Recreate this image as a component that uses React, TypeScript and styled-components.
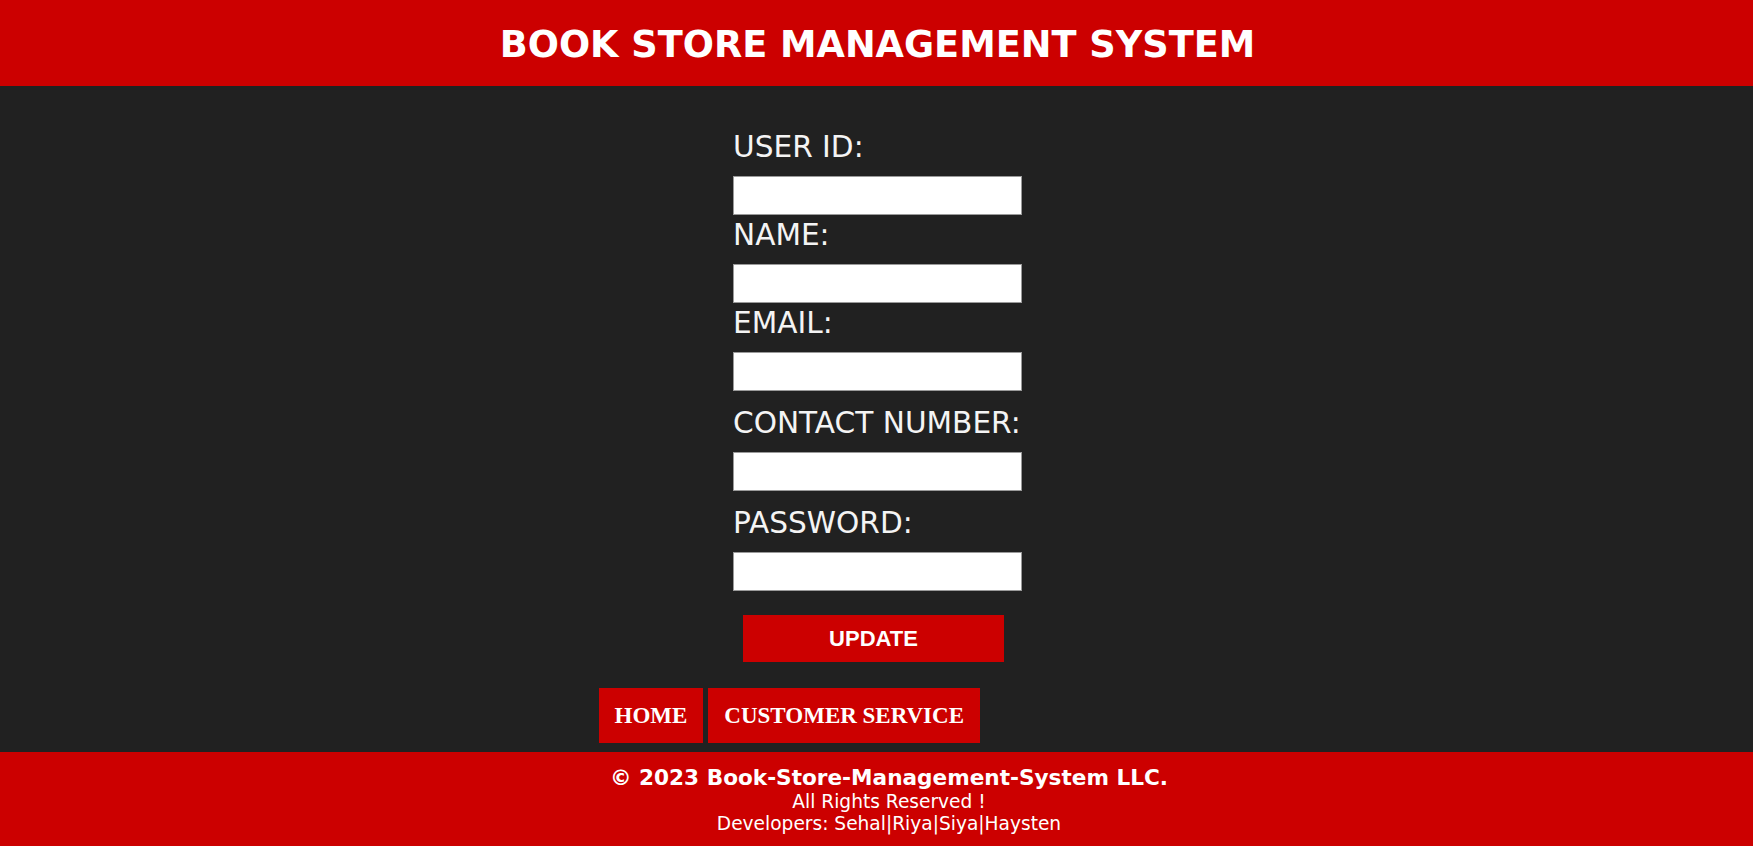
import React from "react";
import styled, { createGlobalStyle } from "styled-components";

const GlobalStyle = createGlobalStyle`
  html, body {
    margin: 0;
    padding: 0;
    background: #212121;
  }
  * { box-sizing: border-box; }
`;

const Page = styled.div`
  display: flex;
  flex-direction: column;
  min-height: 846px;
  background: #212121;
  font-family: "DejaVu Sans", Verdana, sans-serif;
`;

const Header = styled.header`
  height: 86px;
  background: #cc0000;
  display: flex;
  align-items: center;
  justify-content: center;
`;

const Title = styled.h1`
  margin: 0;
  color: #ffffff;
  font-family: "DejaVu Sans", Verdana, sans-serif;
  font-weight: bold;
  font-size: 36.7px;
  line-height: 1;
  padding-top: 4px;
  padding-left: 2px;
`;

const Main = styled.main`
  flex: 1;
  display: flex;
  flex-direction: column;
  align-items: center;
  padding: 44px 0 9px 2px;
`;

const Form = styled.form`
  width: 289px;
  display: flex;
  flex-direction: column;
`;

const Field = styled.div<{ $top: number }>`
  display: flex;
  flex-direction: column;
  margin-top: ${(p) => p.$top}px;
`;

const Label = styled.label`
  display: block;
  color: #f4f4f4;
  font-family: "DejaVu Sans", Verdana, sans-serif;
  font-size: 29.6px;
  line-height: 34px;
  white-space: nowrap;
  margin-bottom: 12px;
`;

const Input = styled.input`
  width: 289px;
  height: 39px;
  border: 1px solid #9a9a9a;
  background: #ffffff;
  padding: 0 6px;
  margin: 0;
  font-size: 18px;
  outline: none;
`;

const UpdateButton = styled.button`
  width: 261px;
  height: 47px;
  margin: 24px 0 0 10px;
  border: none;
  background: #cc0000;
  color: #ffffff;
  font-family: "Liberation Sans", Arial, sans-serif;
  font-weight: bold;
  font-size: 22px;
  cursor: pointer;
`;

const NavRow = styled.nav`
  width: 556px;
  margin-right: 2px;
  display: flex;
  gap: 5px;
  margin-top: 26px;
`;

const NavButton = styled.a`
  display: flex;
  align-items: center;
  height: 55px;
  padding: 0 16px;
  background: #cc0000;
  color: #ffffff;
  font-family: "Liberation Serif", "Times New Roman", serif;
  font-weight: bold;
  font-size: 23px;
  text-decoration: none;
  white-space: nowrap;
`;

const Footer = styled.footer`
  background: #cc0000;
  color: #ffffff;
  text-align: center;
  padding: 13px 0 11px 25px;
  font-family: "DejaVu Sans", Verdana, sans-serif;
`;

const Copyright = styled.div`
  font-weight: bold;
  font-size: 21.6px;
  line-height: 26px;
`;

const FooterLine = styled.div`
  font-size: 18.6px;
  line-height: 22px;
`;

const fields = [
  { label: "USER ID:", type: "text", top: 0 },
  { label: "NAME:", type: "text", top: 3 },
  { label: "EMAIL:", type: "email", top: 3 },
  { label: "CONTACT NUMBER:", type: "tel", top: 15 },
  { label: "PASSWORD:", type: "password", top: 15 },
];

export default function App() {
  return (
    <>
      <GlobalStyle />
      <Page>
        <Header>
          <Title>BOOK STORE MANAGEMENT SYSTEM</Title>
        </Header>
        <Main>
          <Form onSubmit={(e) => e.preventDefault()}>
            {fields.map((f) => (
              <Field key={f.label} $top={f.top}>
                <Label>{f.label}</Label>
                <Input type={f.type} />
              </Field>
            ))}
            <UpdateButton type="submit">UPDATE</UpdateButton>
          </Form>
          <NavRow>
            <NavButton href="#">HOME</NavButton>
            <NavButton href="#">CUSTOMER SERVICE</NavButton>
          </NavRow>
        </Main>
        <Footer>
          <Copyright>© 2023 Book-Store-Management-System LLC.</Copyright>
          <FooterLine>All Rights Reserved !</FooterLine>
          <FooterLine>Developers: Sehal|Riya|Siya|Haysten</FooterLine>
        </Footer>
      </Page>
    </>
  );
}
